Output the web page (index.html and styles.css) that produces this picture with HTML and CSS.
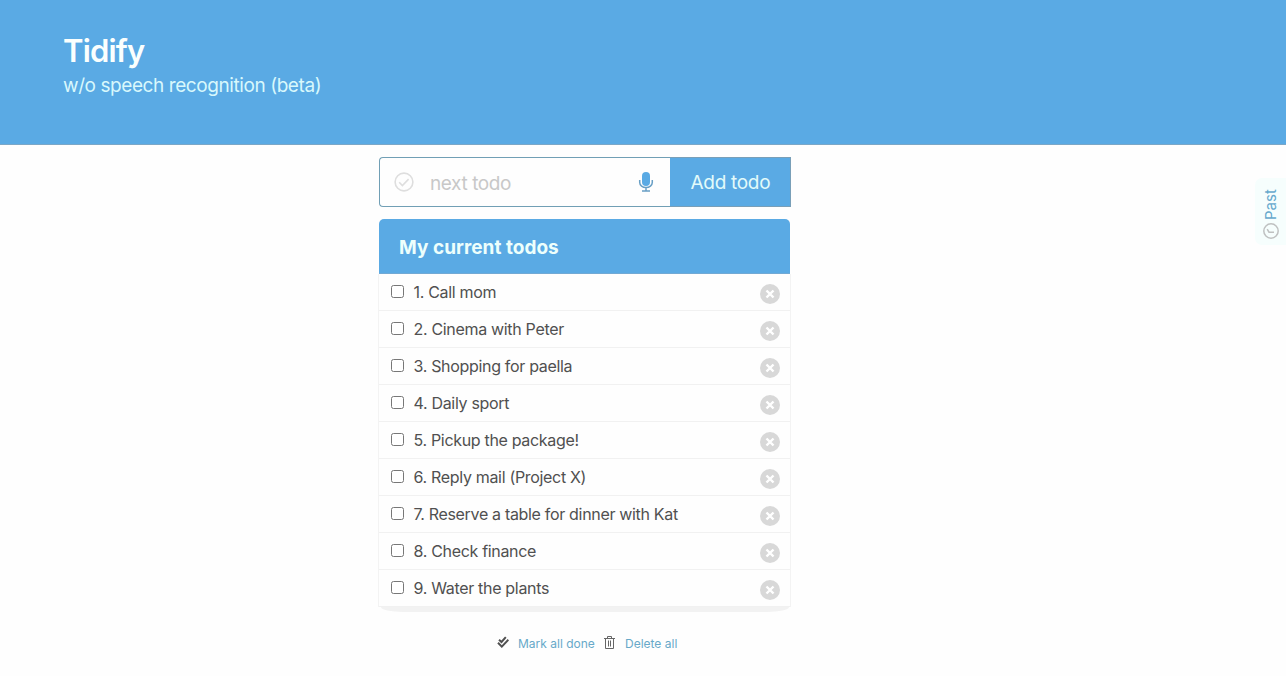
FILE: index.html
```html
<!DOCTYPE html>
<html lang="en">
<head>
<meta charset="utf-8">
<title>Tidify</title>
<link rel="stylesheet" href="styles.css">
</head>
<body>
<header class="banner">
  <h1 class="title">Tidify</h1>
  <p class="subtitle">w/o speech recognition (beta)</p>
</header>
<main class="main">
  <form class="entry">
    <div class="field">
      <svg class="check" viewBox="0 0 20 20"><circle cx="10" cy="10" r="8.9"/><path d="M5.2 10.2l3.2 3.4 6.2-6.5"/></svg>
      <span class="placeholder">next todo</span>
      <svg class="mic" viewBox="0 0 16 20"><rect x="4" y="0" width="8" height="14" rx="4"/><path d="M1.700 8v2.600a6.300 5 0 0 0 12.600 0V8M8 15.600v3M4 19h8"/></svg>
    </div>
    <div class="add">Add todo</div>
  </form>
  <section class="card">
    <h2 class="card-title">My current todos</h2>
    <ul class="list">
      <li class="row"><i class="box"></i><span class="label">1. Call mom</span><svg class="remove" viewBox="0 0 20 20"><circle cx="10" cy="10" r="10"/><path d="M6.500 6.500l7 7M13.500 6.500l-7 7"/></svg></li>
      <li class="row"><i class="box"></i><span class="label">2. Cinema with Peter</span><svg class="remove" viewBox="0 0 20 20"><circle cx="10" cy="10" r="10"/><path d="M6.500 6.500l7 7M13.500 6.500l-7 7"/></svg></li>
      <li class="row"><i class="box"></i><span class="label">3. Shopping for paella</span><svg class="remove" viewBox="0 0 20 20"><circle cx="10" cy="10" r="10"/><path d="M6.500 6.500l7 7M13.500 6.500l-7 7"/></svg></li>
      <li class="row"><i class="box"></i><span class="label">4. Daily sport</span><svg class="remove" viewBox="0 0 20 20"><circle cx="10" cy="10" r="10"/><path d="M6.500 6.500l7 7M13.500 6.500l-7 7"/></svg></li>
      <li class="row"><i class="box"></i><span class="label">5. Pickup the package!</span><svg class="remove" viewBox="0 0 20 20"><circle cx="10" cy="10" r="10"/><path d="M6.500 6.500l7 7M13.500 6.500l-7 7"/></svg></li>
      <li class="row"><i class="box"></i><span class="label">6. Reply mail (Project X)</span><svg class="remove" viewBox="0 0 20 20"><circle cx="10" cy="10" r="10"/><path d="M6.500 6.500l7 7M13.500 6.500l-7 7"/></svg></li>
      <li class="row"><i class="box"></i><span class="label">7. Reserve a table for dinner with Kat</span><svg class="remove" viewBox="0 0 20 20"><circle cx="10" cy="10" r="10"/><path d="M6.500 6.500l7 7M13.500 6.500l-7 7"/></svg></li>
      <li class="row"><i class="box"></i><span class="label">8. Check finance</span><svg class="remove" viewBox="0 0 20 20"><circle cx="10" cy="10" r="10"/><path d="M6.500 6.500l7 7M13.500 6.500l-7 7"/></svg></li>
      <li class="row"><i class="box"></i><span class="label">9. Water the plants</span><svg class="remove" viewBox="0 0 20 20"><circle cx="10" cy="10" r="10"/><path d="M6.500 6.500l7 7M13.500 6.500l-7 7"/></svg></li>
    </ul>
    <div class="card-foot"></div>
  </section>
  <div class="actions">
    <svg class="double-check" viewBox="0 0 12 12"><path d="M2 3.800l2.500 2.200L8.800 1.200M1 6.800l3.800 3.800L11.400 3.800"/></svg>
    <a class="link mark">Mark all done</a>
    <svg class="trash" viewBox="0 0 11 13"><path d="M0 2.500h11M3.500 2.500v-2h4v2M1.500 2.500v10h8v-10M4.500 4.500v6M6.500 4.500v6"/></svg>
    <a class="link">Delete all</a>
  </div>
</main>
<aside class="past">
  <svg class="clock" viewBox="0 0 16 16"><circle cx="8" cy="8" r="7.200"/><path d="M4.200 6.200L6 9.200h5"/></svg>
  <span class="past-label">Past</span>
</aside>
</body>
</html>
```

FILE: styles.css
```css
* { box-sizing: border-box; }
body { margin: 0; height: 676px; overflow: hidden; background: #fefefe; font-family: Inter, "Liberation Sans", sans-serif; color: #505050; }
.banner { height: 145px; padding: 31px 63px 0; background: #5aaae4; border-bottom: 1px solid #7ba7c7; }
.title { margin: 0; font-size: 31px; line-height: 40px; font-weight: 600; letter-spacing: -0.8px; color: #fafffe; }
.subtitle { margin: 3px 0 0; font-size: 19px; line-height: 24px; letter-spacing: -0.42px; color: #d8f8fc; }
.main { width: 412px; margin: 12px 0 0 379px; }
.entry { display: flex; height: 50px; }
.field { display: flex; align-items: center; width: 291px; padding: 0 16px 0 14px; border: 1px solid #719fb5; border-right: 0; border-radius: 4px 0 0 4px; }
.check { width: 20px; height: 20px; fill: none; stroke: #dedede; stroke-width: 1.6; }
.placeholder { flex: 1; margin: 3px 0 0 16px; font-size: 19px; line-height: 24px; letter-spacing: -0.4px; color: #c8c8c8; }
.mic { width: 16px; height: 20px; fill: #5aaae4; }
.mic path { fill: none; stroke: #689fc5; stroke-width: 1.5; }
.add { width: 121px; padding-left: 20.5px; background: #5aaae4; border: 1px solid #799fb8; border-left: 0; font-size: 19px; line-height: 49px; letter-spacing: -0.3px; color: #e2fbfa; white-space: nowrap; }
.card { width: 412px; margin-top: 12px; }
.card-title { width: 411px; height: 55px; margin: 0; padding-left: 20px; border-radius: 5px 5px 0 0; background: #5aaae4; border-bottom: 1px solid #72a9d4; color: #edfffc; font-size: 19px; line-height: 57px; font-weight: 700; letter-spacing: 0.03px; }
.list { margin: 0 0 0 -1px; padding: 0; list-style: none; border: solid #f3f3f3; border-width: 0 1px; }
.row { display: flex; height: 37px; padding: 0 10px 0 12px; border-bottom: 1px solid #f1f1f1; }
.box { width: 13px; height: 13px; margin-top: 11px; border: 1px solid #777; border-radius: 2.5px; background: #fff; }
.label { flex: 1; margin-left: 9.5px; font-size: 16px; line-height: 37px; letter-spacing: -0.32px; }
.remove { width: 20px; height: 20px; margin-top: 10px; fill: #d8d8d8; }
.remove path { stroke: #fff; stroke-width: 2.4; }
.card-foot { width: 408px; margin-left: 2px; height: 5px; background: #f2f2f2; border-radius: 0 0 22px 22px / 0 0 5px 5px; }
.actions { display: flex; align-items: center; height: 18px; margin-top: 21px; padding-left: 118px; }
.double-check { width: 12px; height: 12px; fill: none; stroke: #505050; stroke-width: 2; }
.link { font-size: 12px; line-height: 18px; color: #67a9c9; white-space: nowrap; margin-left: 9px; padding-top: 3px; }
.mark { width: 77px; }
.trash { width: 11px; height: 13px; margin-left: 9px; fill: none; stroke: #666; stroke-width: 1; }
.trash + .link { margin-left: 10px; }
.past { position: absolute; right: 0; top: 178px; display: flex; flex-direction: column-reverse; align-items: center; width: 31px; height: 67px; padding: 10px 0 6px; border-radius: 7px 0 0 7px; background: #f6fefd; }
.clock { width: 16px; height: 16px; flex: none; fill: none; stroke: #bfc1c1; stroke-width: 1.5; }
.past-label { writing-mode: vertical-rl; transform: rotate(180deg); margin-bottom: 3px; height: 33px; line-height: 20px; font-size: 15px; color: #67a9cd; }
```
